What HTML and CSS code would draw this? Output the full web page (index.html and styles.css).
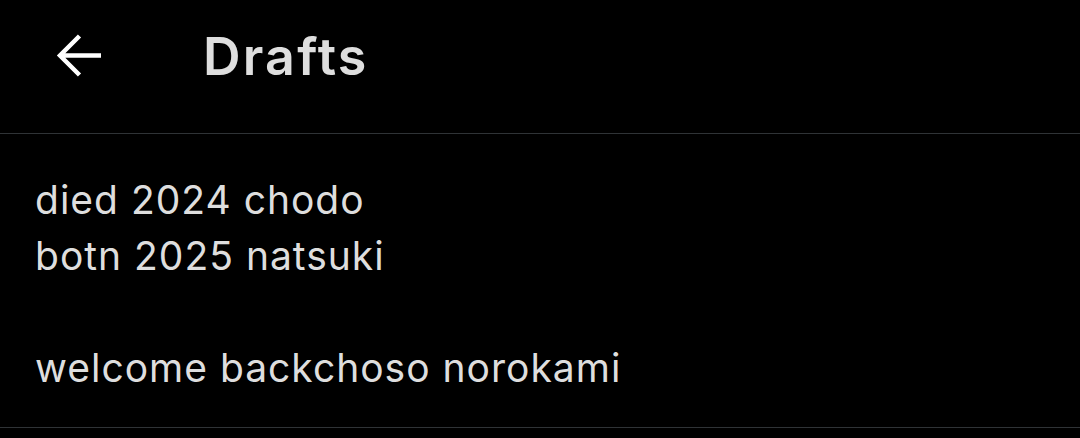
FILE: index.html
```html
<!DOCTYPE html>
<html>
<head>
<meta charset="utf-8">
<link rel="stylesheet" href="styles.css">
</head>
<body>
<div class="app">
  <header class="topbar">
    <button class="back" aria-label="Back">
      <svg width="46" height="46" viewBox="0 0 46 46"><path d="M45 22.5H4M23.5 3L4 22.5 23.5 42" fill="none" stroke="#fff" stroke-width="4.5" stroke-linecap="butt" stroke-linejoin="miter"/></svg>
    </button>
    <h1 class="title">Drafts</h1>
  </header>
  <section class="draft">
    <p class="draft-text">died 2024 chodo<br>botn 2025 natsuki<br><br>welcome backchoso norokami</p>
  </section>
</div>
</body>
</html>
```
FILE: styles.css
```css
html, body { margin: 0; padding: 0; background: #000; }
body { font-family: Inter, "Noto Sans", sans-serif; color: #dedede; width: 1080px; height: 438px; overflow: hidden; }
.topbar { display: flex; align-items: center; height: 134px; border-bottom: 1px solid #2f3336; box-sizing: border-box; }
.back { background: none; border: 0; padding: 0; margin-left: 56px; width: 46px; height: 46px; display: flex; margin-bottom: 22px; }
.title { margin: 0 0 19px 101px; font-size: 52px; font-weight: 600; color: #dedede; letter-spacing: 2.2px; line-height: 1; }
.draft { padding: 38px 35px 30px; border-bottom: 1px solid #2f3336; height: 294px; box-sizing: border-box; }
.draft-text { margin: 0; font-size: 39px; line-height: 56px; letter-spacing: 1px; color: #dedede; }
```
